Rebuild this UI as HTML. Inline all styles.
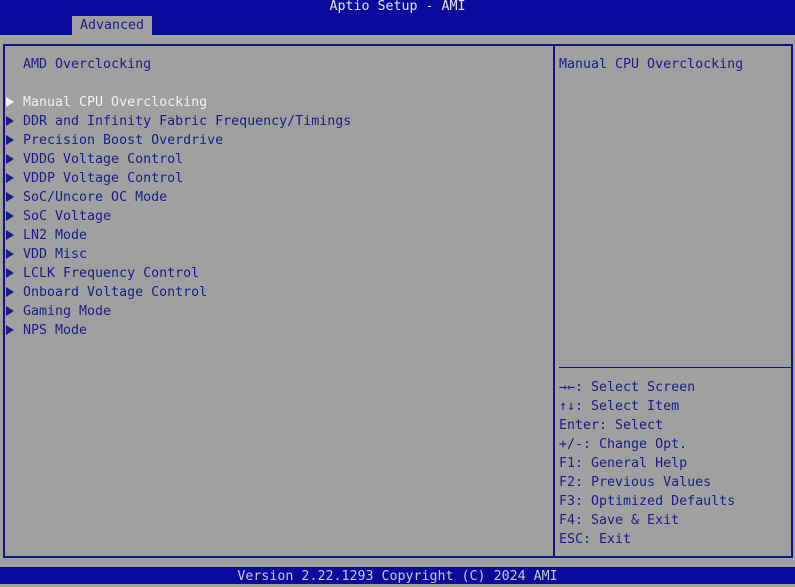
<!DOCTYPE html>
<html><head><meta charset="utf-8"><style>
*{margin:0;padding:0;box-sizing:border-box}
body{width:795px;height:584px;overflow:hidden;background:#a0a0a0;font-family:"DejaVu Sans Mono","Liberation Mono",monospace;font-size:13.3px;color:#1c1c8a;position:relative}
.top{position:absolute;left:0;top:0;width:795px;height:35px;background:#0a0a9c}
.title{position:absolute;top:-1px;left:0;width:795px;text-align:center;color:#e6e6e6;line-height:16px}
.tab{position:absolute;left:72px;top:16px;width:80px;height:19px;background:#a0a0a0;color:#1c1c8a;line-height:19px;text-align:center}
.frame{position:absolute;left:3px;top:44px;width:790px;height:514px;border:2px solid #14147e}
.vl{position:absolute;left:553px;top:44px;width:2px;height:514px;background:#14147e}
.hl{position:absolute;left:559px;top:367px;width:232px;height:1px;background:#14147e}
.t{position:absolute;white-space:pre;line-height:19px}
.arr{position:absolute;width:8px;height:10px}
.bot{position:absolute;left:0;top:567px;width:795px;height:17px;background:#0a0a9c;color:#c8c8c8;text-align:center;line-height:20px}
.w{color:#f2f2f2}
</style></head><body>
<div class="top"><div class="title">Aptio Setup - AMI</div><div class="tab">Advanced</div></div>
<div class="frame"></div><div class="vl"></div><div class="hl"></div>
<div class="t" style="left:23px;top:55px">AMD Overclocking</div>
<div class="t" style="left:559px;top:55px">Manual CPU Overclocking</div>
<div id="m"></div>
<div class="t" style="left:559px;top:378px">→←: Select Screen
↑↓: Select Item
Enter: Select
+/-: Change Opt.
F1: General Help
F2: Previous Values
F3: Optimized Defaults
F4: Save &amp; Exit
ESC: Exit</div>
<div class="bot">Version 2.22.1293 Copyright (C) 2024 AMI</div>
<script>
var items=["Manual CPU Overclocking","DDR and Infinity Fabric Frequency/Timings","Precision Boost Overdrive","VDDG Voltage Control","VDDP Voltage Control","SoC/Uncore OC Mode","SoC Voltage","LN2 Mode","VDD Misc","LCLK Frequency Control","Onboard Voltage Control","Gaming Mode","NPS Mode"];
var h="";
items.forEach(function(s,i){var y=93+i*19;var c=i==0?"#f2f2f2":"#1c1c8a";
h+='<svg class="arr" style="left:6px;top:'+(y+4)+'px" viewBox="0 0 8 10"><polygon points="0,0 8,5 0,10" fill="'+c+'"/></svg>';
h+='<div class="t'+(i==0?' w':'')+'" style="left:23px;top:'+y+'px">'+s+'</div>';});
document.getElementById("m").innerHTML=h;
</script>
</body></html>
